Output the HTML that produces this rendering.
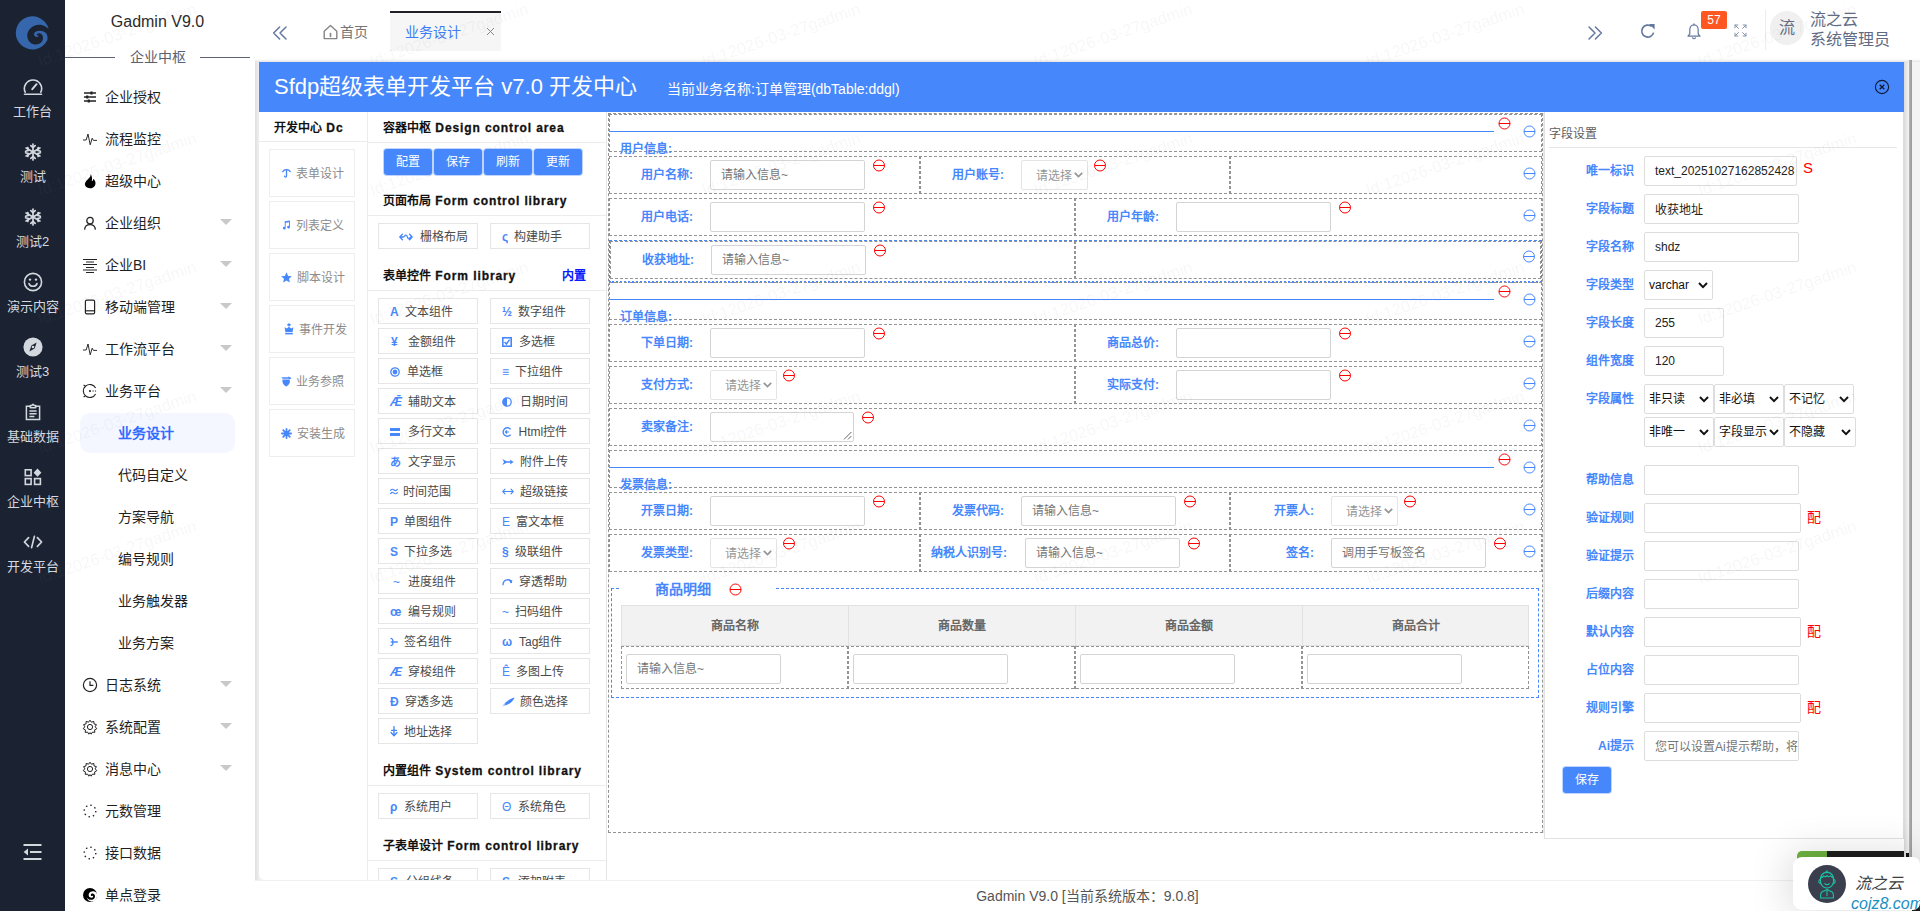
<!DOCTYPE html>
<html lang="zh-CN">
<head>
<meta charset="utf-8">
<title>Gadmin V9.0</title>
<style>
*{box-sizing:border-box;margin:0;padding:0}
html,body{width:1920px;height:911px;overflow:hidden;background:#fff;font-family:"Liberation Sans",sans-serif;font-size:14px;color:#333}
.abs{position:absolute}
/* dark rail */
#rail{position:absolute;left:0;top:0;width:65px;height:911px;background:#1b2332}
#rail .it{position:absolute;left:0;width:65px;text-align:center;color:#d5d9e0;font-size:13px;line-height:16px}
#rail .it svg{display:block;margin:0 auto}
/* side menu */
#side{position:absolute;left:65px;top:0;width:190px;height:911px;background:#fff}
#side .brand{position:absolute;left:0;top:11px;width:185px;text-align:center;font-size:16px;color:#2b2b2b;line-height:22px}
#side .grp{position:absolute;left:0;top:47px;width:185px;text-align:center;font-size:14px;color:#5b6172;line-height:20px}
#side .ln{position:absolute;top:57px;height:1px;background:#5b6172}
.mi{position:absolute;left:0;width:190px;height:42px;line-height:42px;font-size:14px;color:#1f1f1f}
.mi .ic{position:absolute;left:17px;top:13px;width:16px;height:16px}
.mi .tx{position:absolute;left:40px;top:0}
.mi.sub .tx{left:53px}
.mi .ar{position:absolute;left:155px;top:17px;width:0;height:0;border-left:6px solid transparent;border-right:6px solid transparent;border-top:6px solid #c9c9c9}
#selbg{position:absolute;left:15px;top:413px;width:155px;height:40px;background:#f4f7ff;border-radius:10px}
/* header */
#hdr{position:absolute;left:255px;top:0;width:1665px;height:62px;background:#fff}
/* main container */
#shade{position:absolute;left:255px;top:59px;width:1665px;height:852px;background:linear-gradient(90deg,#dfdfdf 0,#efefef 4px,#f3f3f3 5px)}
#shade2{position:absolute;left:255px;top:59px;width:1665px;height:3px;background:linear-gradient(#fff,#e4e4e4)}
#main{position:absolute;left:259px;top:62px;width:1645px;height:818px;background:#fff;border-radius:0 0 0 6px}
#bar{position:absolute;left:0;top:0;width:1646px;height:50px;background:#4787fc;color:#fff}
#bar .t1{position:absolute;left:15px;top:10px;font-size:22px;line-height:30px;white-space:nowrap}
#bar .t2{position:absolute;left:408px;top:18px;font-size:14px;line-height:18px;white-space:nowrap}
#foot{position:absolute;left:255px;top:880px;width:1665px;height:31px;border-top:1px solid #f0f0f0;background:#fff;text-align:center;font-size:14px;line-height:30px;color:#555}

.mi .ic svg{display:block;width:16px;height:16px}
#hdr svg{position:absolute;display:block}
#hdr .tab1{position:absolute;left:85px;top:22px;font-size:14px;line-height:20px;color:#757575}
#hdr .tab2{position:absolute;left:135px;top:11px;width:111px;height:40px;background:#f6f6f6;border-top:2px solid #1f2026}
#hdr .tab2 .t{position:absolute;left:15px;top:8px;font-size:14px;line-height:20px;color:#3d7cf5}
#hdr .badge{position:absolute;left:1446px;top:11px;width:26px;height:18px;background:#ff5722;border-radius:2px;color:#fff;font-size:12px;line-height:18px;text-align:center}
#hdr .vline{position:absolute;left:1510px;top:10px;width:1px;height:40px;background:#ececec}
#hdr .av{position:absolute;left:1515px;top:11px;width:34px;height:34px;border-radius:50%;background:#f0f0f0;color:#5f6b85;font-size:16px;line-height:34px;text-align:center}
#hdr .nm{position:absolute;left:1555px;font-size:16px;line-height:20px;color:#5f6b85;white-space:nowrap}

.lat{letter-spacing:.9px;margin-left:1px;-webkit-text-stroke:.3px #111}
.li{position:absolute;width:100px;height:26px;border:1px solid #e6e6e6;background:#fff;font-size:12px;line-height:26px;white-space:nowrap}
.li .i{position:absolute;left:11px;top:0;color:#4787fc;height:25px;display:flex;align-items:center;font-style:normal}
.li .t{position:absolute;top:0;color:#4a4a4a}
.fl{position:absolute;font-size:12px;font-weight:bold;color:#4787fc;line-height:18px;white-space:nowrap}
#wm{position:absolute;left:0;top:0;width:1920px;height:911px;overflow:hidden;pointer-events:none}
#wm span{position:absolute;font-size:16.5px;line-height:16px;white-space:nowrap;color:rgba(130,130,130,.075);transform-origin:0 13.5px;transform:rotate(-18.8deg)}
#edge1{position:absolute;left:1904px;top:62px;width:5px;height:818px;background:linear-gradient(90deg,#d9d9d9,#f4f4f4)}
#edge2{position:absolute;left:1909px;top:60px;width:3px;height:800px;background:linear-gradient(90deg,#b4b4b4,#9a9a9a)}
#edge3{position:absolute;left:1912px;top:62px;width:8px;height:849px;background:#f4f4f4}
</style>
</head>
<body>
<div id="rail">
<svg class="abs" style="left:8px;top:9.5px" width="50" height="50" viewBox="0 0 50 50"><path d="M40.6 19.2A16.6 16.6 0 1 0 39.4 30C39.8 27 39.4 24.5 37.6 22.8C35 20.4 30.5 20 27.2 22C25.6 23.2 25.6 25.6 27.4 26.6C28.8 27.4 30.8 27 30.8 25.6C29.6 26 28.4 25.2 28.8 24.2C30 22.6 33 23 34.2 25C35.6 27.4 35.2 30.6 33.2 32.6C30.4 35.2 25.4 35.2 22.2 32.4C18.6 29 18.2 23.4 21.4 19.4C25 14.8 32 13.2 37.4 16.4C38.8 17.2 39.8 18.2 40.6 19.2Z" fill="#3667ad"/></svg>
<div class="it" style="top:77px;height:20px"><div style="height:20px;display:flex;align-items:center;justify-content:center"><svg width="20" height="18" viewBox="0 0 20 18" fill="none" stroke="#d3d7de" stroke-width="1.6" stroke-linecap="round"><path d="M2.2 14.2A8.6 8.6 0 1 1 17.8 14.2"/><path d="M1.5 16.3H18.5"/><path d="M9.3 11.2L13.6 6.2" stroke-width="2"/></svg></div></div>
<div class="it" style="top:103.7px">工作台</div>
<div class="it" style="top:142px;height:20px"><div style="height:20px;display:flex;align-items:center;justify-content:center"><svg width="18" height="18" viewBox="0 0 18 18" fill="none" stroke="#d3d7de" stroke-width="1.7" stroke-linecap="round"><path d="M9 1V17M2.1 5L15.9 13M2.1 13L15.9 5"/><path d="M6.8 2.6L9 4.6L11.2 2.6M6.8 15.4L9 13.4L11.2 15.4M1.6 8.3L4.4 7.4L3.8 4.5M16.4 9.7L13.6 10.6L14.2 13.5M3.8 13.5L4.4 10.6L1.6 9.7M14.2 4.5L13.6 7.4L16.4 8.3"/></svg></div></div>
<div class="it" style="top:168.7px">测试</div>
<div class="it" style="top:207px;height:20px"><div style="height:20px;display:flex;align-items:center;justify-content:center"><svg width="18" height="18" viewBox="0 0 18 18" fill="none" stroke="#d3d7de" stroke-width="1.7" stroke-linecap="round"><path d="M9 1V17M2.1 5L15.9 13M2.1 13L15.9 5"/><path d="M6.8 2.6L9 4.6L11.2 2.6M6.8 15.4L9 13.4L11.2 15.4M1.6 8.3L4.4 7.4L3.8 4.5M16.4 9.7L13.6 10.6L14.2 13.5M3.8 13.5L4.4 10.6L1.6 9.7M14.2 4.5L13.6 7.4L16.4 8.3"/></svg></div></div>
<div class="it" style="top:233.7px">测试2</div>
<div class="it" style="top:272px;height:20px"><div style="height:20px;display:flex;align-items:center;justify-content:center"><svg width="20" height="20" viewBox="0 0 20 20" fill="none" stroke="#d3d7de" stroke-width="1.6" stroke-linecap="round"><circle cx="10" cy="10" r="8.6"/><path d="M6 11.6A4.3 4.3 0 0 0 14 11.6"/><circle cx="7" cy="7.6" r="1.2" fill="#d3d7de" stroke="none"/><circle cx="13" cy="7.6" r="1.2" fill="#d3d7de" stroke="none"/></svg></div></div>
<div class="it" style="top:298.7px">演示内容</div>
<div class="it" style="top:337px;height:20px"><div style="height:20px;display:flex;align-items:center;justify-content:center"><svg width="20" height="20" viewBox="0 0 20 20"><circle cx="10" cy="10" r="9.6" fill="#d3d7de"/><path d="M13.6 5.6L11.6 11.4L6.4 14.4L8.4 8.6Z" fill="#1b2332"/><circle cx="10" cy="10" r="1.3" fill="#d3d7de"/></svg></div></div>
<div class="it" style="top:363.7px">测试3</div>
<div class="it" style="top:402px;height:20px"><div style="height:20px;display:flex;align-items:center;justify-content:center"><svg width="18" height="18" viewBox="0 0 18 18" fill="none" stroke="#d3d7de" stroke-width="1.5"><path d="M6.3 3.2H2.4V16.6H15.6V3.2H11.7"/><path d="M6.3 4.8V2.6H7.8L9 1.2L10.2 2.6H11.7V4.8Z" stroke-linejoin="round"/><path d="M5.4 8H12.6M5.4 10.8H12.6M5.4 13.6H10.4"/></svg></div></div>
<div class="it" style="top:428.7px">基础数据</div>
<div class="it" style="top:467px;height:20px"><div style="height:20px;display:flex;align-items:center;justify-content:center"><svg width="18" height="18" viewBox="0 0 18 18" fill="none" stroke="#d3d7de" stroke-width="1.6"><rect x="1.3" y="1.8" width="5.8" height="5.8"/><rect x="1.3" y="10.6" width="5.8" height="5.8"/><rect x="10.6" y="10.6" width="5.8" height="5.8"/><path d="M13.5 0.6L17.4 4.7L13.5 8.8L9.6 4.7Z" fill="#d3d7de" stroke="none"/></svg></div></div>
<div class="it" style="top:493.7px">企业中枢</div>
<div class="it" style="top:532px;height:20px"><div style="height:20px;display:flex;align-items:center;justify-content:center"><svg width="20" height="14" viewBox="0 0 20 14" fill="none" stroke="#d3d7de" stroke-width="1.7" stroke-linecap="round" stroke-linejoin="round"><path d="M5.6 2.6L1.4 7L5.6 11.4M14.4 2.6L18.6 7L14.4 11.4M11.4 1.4L8.6 12.6"/></svg></div></div>
<div class="it" style="top:558.7px">开发平台</div>
<svg class="abs" style="left:23px;top:843px" width="19" height="18" viewBox="0 0 19 18" fill="none" stroke="#d3d7de" stroke-width="2"><path d="M0.5 2H18.5M7 9H18.5M0.5 16H18.5"/><path d="M0.6 9L5 5.6V12.4Z" fill="#d3d7de" stroke="none"/></svg>
</div>
<div id="side">
<div class="brand">Gadmin V9.0</div><div class="ln" style="left:0;width:50px"></div><div class="grp">企业中枢</div><div class="ln" style="left:135px;width:50px"></div><div id="selbg"></div>
<div class="mi" style="top:76px"><span class="ic"><svg viewBox="0 0 16 16" fill="none" stroke="#222" stroke-width="1.4"><path d="M2 4H14M2 8H14M2 12H14"/><path d="M9.5 2.4V5.6M5.2 6.4V9.6M6.8 10.4V13.6" stroke-width="2.2"/></svg></span><span class="tx">企业授权</span></div>
<div class="mi" style="top:118px"><span class="ic"><svg viewBox="0 0 16 16" fill="none" stroke="#222" stroke-width="0.95" stroke-linejoin="round" stroke-linecap="round"><path d="M1.4 9H4.2L6 3L8.2 13.8L10.2 7.2L11.4 9.4H14.6"/></svg></span><span class="tx">流程监控</span></div>
<div class="mi" style="top:160px"><span class="ic"><svg viewBox="0 0 16 16"><path d="M8.2 0.8C9.4 3 7.6 4.6 6 6.2C3.6 8.4 2.2 10.4 3.2 12.6C4.2 14.8 7 15.8 9.4 15.2C12.6 14.4 14.2 11.6 13.2 8.6C12.8 7.4 12.2 6.4 11.4 5.8C11.2 7.2 10.6 8 9.8 8.2C10.4 5.4 10 2.6 8.2 0.8Z" fill="#000"/></svg></span><span class="tx">超级中心</span></div>
<div class="mi" style="top:202px"><span class="ic"><svg viewBox="0 0 16 16" fill="none" stroke="#222" stroke-width="1.3"><circle cx="8" cy="5.6" r="3.2"/><path d="M2.6 14.6C2.8 11.4 4.8 9.6 8 9.6C11.2 9.6 13.2 11.4 13.4 14.6"/></svg></span><span class="tx">企业组织</span><span class="ar"></span></div>
<div class="mi" style="top:244px"><span class="ic"><svg viewBox="0 0 16 16" fill="none" stroke="#222" stroke-width="1"><path d="M1 2.5H15M4 5H12M1 7.5H15M4 10.5H12M1 13H15M4 15.5H12"/></svg></span><span class="tx">企业BI</span><span class="ar"></span></div>
<div class="mi" style="top:286px"><span class="ic"><svg viewBox="0 0 16 16" fill="none" stroke="#222" stroke-width="1.2"><rect x="3.4" y="1.2" width="9.2" height="13.6" rx="1.4"/><path d="M3.4 11.8H12.6"/></svg></span><span class="tx">移动端管理</span><span class="ar"></span></div>
<div class="mi" style="top:328px"><span class="ic"><svg viewBox="0 0 16 16" fill="none" stroke="#222" stroke-width="0.95" stroke-linejoin="round" stroke-linecap="round"><path d="M1.4 9H4.2L6 3L8.2 13.8L10.2 7.2L11.4 9.4H14.6"/></svg></span><span class="tx">工作流平台</span><span class="ar"></span></div>
<div class="mi" style="top:370px"><span class="ic"><svg viewBox="0 0 16 16" fill="none" stroke="#222" stroke-width="1.1"><path d="M13.6 5A6.5 6.5 0 1 0 13.6 11" /><circle cx="8" cy="8" r="1.1" fill="#222" stroke="none"/><path d="M10.5 8H14.6" stroke-dasharray="1.2 1.2"/><path d="M3 3.2L1.6 1.8M3 12.8L1.6 14.2" /></svg></span><span class="tx">业务平台</span><span class="ar"></span></div>
<div class="mi sub" style="top:412px"><span class="tx" style="color:#2f6bff;font-weight:bold">业务设计</span></div>
<div class="mi sub" style="top:454px"><span class="tx">代码自定义</span></div>
<div class="mi sub" style="top:496px"><span class="tx">方案导航</span></div>
<div class="mi sub" style="top:538px"><span class="tx">编号规则</span></div>
<div class="mi sub" style="top:580px"><span class="tx">业务触发器</span></div>
<div class="mi sub" style="top:622px"><span class="tx">业务方案</span></div>
<div class="mi" style="top:664px"><span class="ic"><svg viewBox="0 0 16 16" fill="none" stroke="#222" stroke-width="1.2"><circle cx="8" cy="8" r="6.6"/><path d="M8 4.2V8.4H11.4"/></svg></span><span class="tx">日志系统</span><span class="ar"></span></div>
<div class="mi" style="top:706px"><span class="ic"><svg viewBox="0 0 16 16" fill="none" stroke="#222" stroke-width="1"><circle cx="8" cy="8" r="2.6"/><path d="M8 1.2L9.4 3.2L11.8 2.4L12 4.9L14.4 5.6L13.2 7.8L14.8 9.7L12.6 10.9L12.8 13.4L10.4 13.1L9.2 15.2L8 13.6L6.8 15.2L5.6 13.1L3.2 13.4L3.4 10.9L1.2 9.7L2.8 7.8L1.6 5.6L4 4.9L4.2 2.4L6.6 3.2Z" stroke-linejoin="round"/></svg></span><span class="tx">系统配置</span><span class="ar"></span></div>
<div class="mi" style="top:748px"><span class="ic"><svg viewBox="0 0 16 16" fill="none" stroke="#222" stroke-width="1"><circle cx="8" cy="8" r="2.6"/><path d="M8 1.2L9.4 3.2L11.8 2.4L12 4.9L14.4 5.6L13.2 7.8L14.8 9.7L12.6 10.9L12.8 13.4L10.4 13.1L9.2 15.2L8 13.6L6.8 15.2L5.6 13.1L3.2 13.4L3.4 10.9L1.2 9.7L2.8 7.8L1.6 5.6L4 4.9L4.2 2.4L6.6 3.2Z" stroke-linejoin="round"/></svg></span><span class="tx">消息中心</span><span class="ar"></span></div>
<div class="mi" style="top:790px"><span class="ic"><svg viewBox="0 0 16 16" fill="none" stroke="#222" stroke-width="1.4" stroke-dasharray="1.4 3.1"><circle cx="8" cy="8" r="5.8"/></svg></span><span class="tx">元数管理</span></div>
<div class="mi" style="top:832px"><span class="ic"><svg viewBox="0 0 16 16" fill="none" stroke="#222" stroke-width="1.4" stroke-dasharray="1.4 3.1"><circle cx="8" cy="8" r="5.8"/></svg></span><span class="tx">接口数据</span></div>
<div class="mi" style="top:874px"><span class="ic"><svg viewBox="0 0 16 16"><circle cx="8" cy="8" r="7" fill="#000"/><path d="M14.6 6C12.6 3.6 8.4 3.8 7 6.6C6 8.8 7.4 11 9.6 10.8C11 10.6 11.6 9.2 10.8 8.4C10.2 9.6 8.6 9.2 8.8 7.8C9 6.4 11.2 6 12.4 7.4C13.6 8.8 13 11.4 11 12.4C8.4 13.6 5.6 12.4 4.6 10C5.2 13.6 9 15.4 12 14C14.6 12.6 15.8 9 14.6 6Z" fill="#fff"/></svg></span><span class="tx">单点登录</span></div>
</div>
<div id="hdr">
<svg style="left:17px;top:25px" width="16" height="16" viewBox="0 0 16 16" fill="none" stroke="#64789e" stroke-width="1.5" stroke-linecap="round" stroke-linejoin="round"><path d="M7.6 2L1.6 8L7.6 14M14 2L8 8L14 14"/></svg>
<svg style="left:67px;top:24px" width="17" height="16" viewBox="0 0 17 16" fill="none" stroke="#858585" stroke-width="1.4" stroke-linejoin="round"><path d="M2.2 7.2L8.5 1.6L14.8 7.2V14.6H2.2Z"/><path d="M8.5 9.6V12.4" stroke-linecap="round" stroke-width="1.6"/></svg>
<div class="tab1">首页</div>
<div class="tab2"><div class="t" style="top:9px">业务设计</div><svg style="left:96px;top:14px" width="9" height="9" viewBox="0 0 9 9" stroke="#858585" stroke-width="1"><path d="M1 1L8 8M8 1L1 8"/></svg></div>
<svg style="left:1332px;top:25px" width="16" height="16" viewBox="0 0 16 16" fill="none" stroke="#64789e" stroke-width="1.5" stroke-linecap="round" stroke-linejoin="round"><path d="M2 2L8 8L2 14M8.4 2L14.4 8L8.4 14"/></svg>
<svg style="left:1384px;top:22px" width="18" height="18" viewBox="0 0 18 18" fill="none" stroke="#64789e" stroke-width="1.7"><path d="M14.6 10.6A6 6 0 1 1 12.6 4.4"/><path d="M10 2H15.6V7.6Z" fill="#64789e" stroke="none"/></svg>
<svg style="left:1431px;top:23px" width="16" height="17" viewBox="0 0 16 17" fill="none" stroke="#64789e" stroke-width="1.2" stroke-linejoin="round" stroke-linecap="round"><path d="M8 1.8C5.2 1.8 3.8 4 3.8 6.8V11L2 13.2H14L12.2 11V6.8C12.2 4 10.8 1.8 8 1.8Z"/><path d="M6.6 14.8A1.5 1.5 0 0 0 9.4 14.8"/><path d="M8 0.8V1.8"/></svg>
<div class="badge">57</div>
<svg style="left:1479px;top:24px" width="13" height="13" viewBox="0 0 13 13" fill="none" stroke="#8290ab" stroke-width="1" stroke-linecap="round"><path d="M1 3.8V1H3.8M1 1L4.4 4.4M9.2 1H12V3.8M12 1L8.6 4.4M1 9.2V12H3.8M1 12L4.4 8.6M12 9.2V12H9.2M12 12L8.6 8.6" /></svg>
<div class="vline"></div>
<div class="av">流</div>
<div class="nm" style="top:10px">流之云</div><div class="nm" style="top:30px">系统管理员</div>
</div>
<div id="shade"></div><div id="shade2"></div>
<div id="main">
  <div id="bar"><div class="t1">Sfdp超级表单开发平台 v7.0 开发中心</div><div class="t2">当前业务名称:订单管理(dbTable:ddgl)</div>
  <svg style="position:absolute;left:1615px;top:17px" width="16" height="16" viewBox="0 0 16 16" fill="none" stroke="#0d1a33" stroke-width="1.1"><circle cx="8" cy="8" r="6.6"/><path d="M5.7 5.7L10.3 10.3M10.3 5.7L5.7 10.3" stroke-width="1.3"/></svg></div>
</div>
<div id="foot">Gadmin V9.0 [当前系统版本：9.0.8]</div>
<div id="edge1"></div><div id="edge3"></div><div id="edge2"></div>
<div id="cv">
<div style="position:absolute;left:274px;top:119px;white-space:nowrap;font-size:12px;font-weight:bold;color:#111;line-height:18px">开发中心 <span class="lat">Dc</span></div>
<div style="position:absolute;left:259px;top:141px;width:108px;height:1px;background:#ececec"></div>
<div style="position:absolute;left:367px;top:112px;width:1px;height:768px;background:#ececec"></div>
<div style="position:absolute;left:269px;top:149px;width:86px;height:48px;border:1px solid #eee;background:#fff"></div>
<div style="position:absolute;left:280px;top:167px;width:12px;height:12px;display:flex;align-items:center;justify-content:center"><svg width="9" height="10.5" viewBox="0 0 10 12" fill="none" stroke="#4787fc" stroke-width="1.5" stroke-linecap="round"><path d="M0.8 4.2C2.4 1.2 7.6 1.2 9.2 4.2"/><path d="M5 2.2V9.2C5 10.8 3 10.8 2.8 9.4"/></svg></div>
<div style="position:absolute;left:296px;top:165px;white-space:nowrap;font-size:12px;color:#8c8c8c;line-height:18px">表单设计</div>
<div style="position:absolute;left:269px;top:201px;width:86px;height:48px;border:1px solid #eee;background:#fff"></div>
<div style="position:absolute;left:280px;top:219px;width:12px;height:12px;display:flex;align-items:center;justify-content:center"><svg width="8.5" height="10" viewBox="0 0 10 12" fill="#4787fc"><path d="M3.2 1.6L9.4 0.6V8.6A1.7 1.5 0 1 1 8.3 7.2V2.6L4.3 3.3V9.8A1.7 1.5 0 1 1 3.2 8.4Z"/></svg></div>
<div style="position:absolute;left:296px;top:217px;white-space:nowrap;font-size:12px;color:#8c8c8c;line-height:18px">列表定义</div>
<div style="position:absolute;left:269px;top:253px;width:86px;height:48px;border:1px solid #eee;background:#fff"></div>
<div style="position:absolute;left:280px;top:271px;width:12px;height:12px;display:flex;align-items:center;justify-content:center"><svg width="11" height="11" viewBox="0 0 11 11" fill="#4787fc"><path d="M5.5 0.3L7.1 3.9L10.9 4.2L8 6.7L8.9 10.5L5.5 8.5L2.1 10.5L3 6.7L0.1 4.2L3.9 3.9Z"/></svg></div>
<div style="position:absolute;left:296.5px;top:269px;white-space:nowrap;font-size:12px;color:#8c8c8c;line-height:18px">脚本设计</div>
<div style="position:absolute;left:269px;top:305px;width:86px;height:48px;border:1px solid #eee;background:#fff"></div>
<div style="position:absolute;left:283px;top:323px;width:12px;height:12px;display:flex;align-items:center;justify-content:center"><svg width="10" height="12" viewBox="0 0 10 12" fill="#4787fc"><rect x="4.2" y="0.4" width="1.6" height="3"/><rect x="3.2" y="1.1" width="3.6" height="1.3"/><path d="M0.6 4.2L2.8 5.6L5 3.8L7.2 5.6L9.4 4.2L8.6 9H1.4Z"/><rect x="1.2" y="9.8" width="7.6" height="1.6"/></svg></div>
<div style="position:absolute;left:299px;top:321px;white-space:nowrap;font-size:12px;color:#8c8c8c;line-height:18px">事件开发</div>
<div style="position:absolute;left:269px;top:357px;width:86px;height:48px;border:1px solid #eee;background:#fff"></div>
<div style="position:absolute;left:280px;top:375px;width:12px;height:12px;display:flex;align-items:center;justify-content:center"><svg width="11" height="11" viewBox="0 0 11 11" fill="#4787fc"><path d="M0.4 1.2H9.8L8.6 2.8H1.6Z"/><path d="M1.6 3.6H8.6C9.6 6.2 7.8 9.8 5.2 10.4C2.6 9.8 0.8 6.2 1.6 3.6Z"/><path d="M7.2 0.2L10.6 2.4L8 3.2Z"/></svg></div>
<div style="position:absolute;left:296px;top:373px;white-space:nowrap;font-size:12px;color:#8c8c8c;line-height:18px">业务参照</div>
<div style="position:absolute;left:269px;top:409px;width:86px;height:48px;border:1px solid #eee;background:#fff"></div>
<div style="position:absolute;left:280px;top:427px;width:12px;height:12px;display:flex;align-items:center;justify-content:center"><svg width="11" height="11" viewBox="0 0 11 11" fill="none" stroke="#4787fc" stroke-width="1.8" stroke-linecap="round"><path d="M5.5 0.9V10.1M0.9 5.5H10.1M2.2 2.2L8.8 8.8M8.8 2.2L2.2 8.8"/></svg></div>
<div style="position:absolute;left:297px;top:425px;white-space:nowrap;font-size:12px;color:#8c8c8c;line-height:18px">安装生成</div>
<div style="position:absolute;left:606px;top:112px;width:1px;height:768px;background:#e4e4e4"></div>
<div style="position:absolute;left:383px;top:119px;white-space:nowrap;font-size:12px;font-weight:bold;color:#111;line-height:18px">容器中枢 <span class="lat">Design control area</span></div>
<div style="position:absolute;left:368px;top:142px;width:238px;height:1px;background:#ececec"></div>
<div style="position:absolute;left:384px;top:149px;width:48px;height:26px;background:#4787fc;border-radius:3px;color:#fff;font-size:12px;line-height:27px;text-align:center;box-shadow:0 0 0 1px rgba(71,135,252,.35)">配置</div>
<div style="position:absolute;left:434px;top:149px;width:48px;height:26px;background:#4787fc;border-radius:3px;color:#fff;font-size:12px;line-height:27px;text-align:center;box-shadow:0 0 0 1px rgba(71,135,252,.35)">保存</div>
<div style="position:absolute;left:484px;top:149px;width:48px;height:26px;background:#4787fc;border-radius:3px;color:#fff;font-size:12px;line-height:27px;text-align:center;box-shadow:0 0 0 1px rgba(71,135,252,.35)">刷新</div>
<div style="position:absolute;left:534px;top:149px;width:48px;height:26px;background:#4787fc;border-radius:3px;color:#fff;font-size:12px;line-height:27px;text-align:center;box-shadow:0 0 0 1px rgba(71,135,252,.35)">更新</div>
<div style="position:absolute;left:383px;top:192px;white-space:nowrap;font-size:12px;font-weight:bold;color:#111;line-height:18px">页面布局 <span class="lat">Form control library</span></div>
<div style="position:absolute;left:368px;top:215px;width:238px;height:1px;background:#ececec"></div>
<div class="li" style="left:378px;top:223px"><span class="i" style=""><svg width="14" height="8" viewBox="0 0 14 8" fill="none" stroke="#4787fc" stroke-width="1.3" stroke-linecap="round" stroke-linejoin="round" style="margin-left:9px"><path d="M3.4 1.2L0.8 4L3.4 6.8M0.8 4H4.4C5.6 4 5.6 2.2 7 2.2C8.4 2.2 8.4 5.8 9.8 5.8C10.6 5.8 10.8 4 13.2 4M10.6 1.2L13.2 4L10.6 6.8"/></svg></span><span class="t" style="left:41px">栅格布局</span></div>
<div class="li" style="left:490px;top:223px"><span class="i" style="font-weight:bold">ς</span><span class="t" style="left:23px">构建助手</span></div>
<div style="position:absolute;left:383px;top:267px;white-space:nowrap;font-size:12px;font-weight:bold;color:#111;line-height:18px">表单控件 <span class="lat">Form library</span></div>
<div style="position:absolute;left:368px;top:290px;width:238px;height:1px;background:#ececec"></div>
<div style="position:absolute;left:562px;top:267px;white-space:nowrap;font-size:12px;font-weight:bold;color:#0a1cff;line-height:18px">内置</div>
<div class="li" style="left:378px;top:298px"><span class="i" style="font-weight:bold">A</span><span class="t" style="left:25.5px">文本组件</span></div>
<div class="li" style="left:490px;top:298px"><span class="i" style="font-weight:bold">½</span><span class="t" style="left:27px">数字组件</span></div>
<div class="li" style="left:378px;top:328px"><span class="i" style="font-weight:bold;padding-left:1px">¥</span><span class="t" style="left:29px">金额组件</span></div>
<div class="li" style="left:490px;top:328px"><span class="i" style=""><svg width="10" height="10" viewBox="0 0 10 10" fill="none" stroke="#4787fc"><rect x="0.8" y="0.8" width="8.4" height="8.4" stroke-width="1.6"/><path d="M2.6 5L4.4 7L7.6 2.6" stroke-width="1.5"/></svg></span><span class="t" style="left:27.5px">多选框</span></div>
<div class="li" style="left:378px;top:358px"><span class="i" style=""><svg width="10" height="10" viewBox="0 0 10 10"><circle cx="5" cy="5" r="4.2" fill="none" stroke="#4787fc" stroke-width="1.3"/><circle cx="5" cy="5" r="2.4" fill="#4787fc"/></svg></span><span class="t" style="left:28px">单选框</span></div>
<div class="li" style="left:490px;top:358px"><span class="i" style="font-weight:bold">≡</span><span class="t" style="left:23.5px">下拉组件</span></div>
<div class="li" style="left:378px;top:388px"><span class="i" style=""><i style="font-weight:bold">Ǣ</i></span><span class="t" style="left:29px">辅助文本</span></div>
<div class="li" style="left:490px;top:388px"><span class="i" style=""><svg width="10" height="10" viewBox="0 0 10 10"><circle cx="5" cy="5" r="4.2" fill="none" stroke="#4787fc" stroke-width="1.3"/><path d="M5 0.8A4.2 4.2 0 0 0 5 9.2Z" fill="#4787fc"/></svg></span><span class="t" style="left:28.5px">日期时间</span></div>
<div class="li" style="left:378px;top:418px"><span class="i" style=""><svg width="10" height="10" viewBox="0 0 10 10" fill="#4787fc"><rect x="0" y="1" width="10" height="3"/><rect x="0" y="6" width="10" height="3"/></svg></span><span class="t" style="left:29px">多行文本</span></div>
<div class="li" style="left:490px;top:418px"><span class="i" style=""><svg width="10" height="10" viewBox="0 0 10 10" fill="none" stroke="#4787fc" stroke-width="1.4"><path d="M8.6 2.4A4.2 4.2 0 1 0 8.6 7.6"/><path d="M7 5H3.4M5 3.4L3.4 5L5 6.6" stroke-width="1.2"/></svg></span><span class="t" style="left:27.5px">Html控件</span></div>
<div class="li" style="left:378px;top:448px"><span class="i" style="font-weight:bold;font-size:11px">あ</span><span class="t" style="left:29px">文字显示</span></div>
<div class="li" style="left:490px;top:448px"><span class="i" style=""><svg width="12" height="8" viewBox="0 0 12 8" fill="#4787fc"><path d="M0.4 1L4.6 3.2H8.4L8 1.6L11.6 4L8 6.4L8.4 4.8H4.6L0.4 7L2 4Z"/></svg></span><span class="t" style="left:29px">附件上传</span></div>
<div class="li" style="left:378px;top:478px"><span class="i" style=""><svg width="8" height="7" viewBox="0 0 8 7" fill="none" stroke="#4787fc" stroke-width="1.1" stroke-linecap="round"><path d="M0.6 2.4C2 0.4 3.4 1.4 4 2C4.8 2.8 6.2 3 7.4 1.4M0.6 5.6C2 3.6 3.4 4.6 4 5.2C4.8 6 6.2 6.2 7.4 4.6"/></svg></span><span class="t" style="left:23.5px">时间范围</span></div>
<div class="li" style="left:490px;top:478px"><span class="i" style=""><svg width="12" height="7" viewBox="0 0 12 7" fill="none" stroke="#4787fc" stroke-width="1.1" stroke-linecap="round" stroke-linejoin="round"><path d="M0.8 3.5H11.2M3 1.2L0.8 3.5L3 5.8M9 1.2L11.2 3.5L9 5.8"/></svg></span><span class="t" style="left:29px">超级链接</span></div>
<div class="li" style="left:378px;top:508px"><span class="i" style="font-weight:bold">P</span><span class="t" style="left:25px">单图组件</span></div>
<div class="li" style="left:490px;top:508px"><span class="i" style="">E</span><span class="t" style="left:25px">富文本框</span></div>
<div class="li" style="left:378px;top:538px"><span class="i" style="font-weight:bold">S</span><span class="t" style="left:25px">下拉多选</span></div>
<div class="li" style="left:490px;top:538px"><span class="i" style="font-weight:bold">§</span><span class="t" style="left:23.5px">级联组件</span></div>
<div class="li" style="left:378px;top:568px"><span class="i" style="padding-left:3px">~</span><span class="t" style="left:29px">进度组件</span></div>
<div class="li" style="left:490px;top:568px"><span class="i" style=""><svg width="11" height="8" viewBox="0 0 11 8" fill="none" stroke="#4787fc" stroke-width="1.4" stroke-linecap="round"><path d="M1 6.6C1.4 0.6 8 0.6 9.4 4.4"/><path d="M7 1.6L10.6 2.4L8.6 5.6Z" fill="#4787fc" stroke="none"/></svg></span><span class="t" style="left:28px">穿透帮助</span></div>
<div class="li" style="left:378px;top:598px"><span class="i" style="font-weight:bold">œ</span><span class="t" style="left:28.5px">编号规则</span></div>
<div class="li" style="left:490px;top:598px"><span class="i" style="">~</span><span class="t" style="left:23.5px">扫码组件</span></div>
<div class="li" style="left:378px;top:628px"><span class="i" style=""><svg width="8" height="10" viewBox="0 0 8 10" fill="none" stroke="#4787fc" stroke-width="1.3" stroke-linecap="round"><path d="M1 1.4C3.4 2.2 3.4 4 1.6 5C3.4 6 3.4 7.8 1 8.6M2.8 5H7.4"/></svg></span><span class="t" style="left:25px">签名组件</span></div>
<div class="li" style="left:490px;top:628px"><span class="i" style="font-weight:bold">ω</span><span class="t" style="left:28px">Tag组件</span></div>
<div class="li" style="left:378px;top:658px"><span class="i" style="font-weight:bold"><i>Æ</i></span><span class="t" style="left:29px">穿梭组件</span></div>
<div class="li" style="left:490px;top:658px"><span class="i" style="">Ê</span><span class="t" style="left:25px">多图上传</span></div>
<div class="li" style="left:378px;top:688px"><span class="i" style="font-weight:bold">Đ</span><span class="t" style="left:26px">穿透多选</span></div>
<div class="li" style="left:490px;top:688px"><span class="i" style=""><svg width="13" height="10" viewBox="0 0 13 10" fill="#4787fc"><path d="M0.4 9.6C2 6.4 7 1.6 12.6 0.4C11.4 4.6 5.6 8.2 2.4 8.6Z"/><path d="M0.2 9.8L3.4 7" stroke="#fff" stroke-width="0.6"/></svg></span><span class="t" style="left:29px">颜色选择</span></div>
<div class="li" style="left:378px;top:718px"><span class="i" style=""><svg width="8" height="11" viewBox="0 0 8 11" fill="none" stroke="#4787fc" stroke-width="1.4" stroke-linecap="round" stroke-linejoin="round"><path d="M4 0.8V9.6M1 6.6L4 9.8L7 6.6M1.6 4.4H6.4"/></svg></span><span class="t" style="left:24.5px">地址选择</span></div>
<div style="position:absolute;left:383px;top:762px;white-space:nowrap;font-size:12px;font-weight:bold;color:#111;line-height:18px">内置组件 <span class="lat">System control library</span></div>
<div style="position:absolute;left:368px;top:785px;width:238px;height:1px;background:#ececec"></div>
<div class="li" style="left:378px;top:793px"><span class="i" style="font-weight:bold">ρ</span><span class="t" style="left:25px">系统用户</span></div>
<div class="li" style="left:490px;top:793px"><span class="i" style="">Θ</span><span class="t" style="left:27px">系统角色</span></div>
<div style="position:absolute;left:383px;top:837px;white-space:nowrap;font-size:12px;font-weight:bold;color:#111;line-height:18px">子表单设计 <span class="lat">Form control library</span></div>
<div style="position:absolute;left:368px;top:860px;width:238px;height:1px;background:#ececec"></div>
<div style="position:absolute;left:368px;top:861px;width:238px;height:19px;overflow:hidden">
<div class="li" style="left:10px;top:7px"><span class="i" style="font-weight:bold">S</span><span class="t" style="left:27px">分组线条</span></div>
<div class="li" style="left:122px;top:7px"><span class="i" style="font-weight:bold">S</span><span class="t" style="left:27px">添加附表</span></div>
</div>
<div style="position:absolute;left:608px;top:113px;width:935px;height:720px;border:1px dashed #939393"></div>
<div style="position:absolute;left:1543px;top:113px;width:2px;height:720px;background:#ebebeb"></div>
<div style="position:absolute;left:609px;top:114px;width:933px;height:38px;border:1px dashed #939393"></div>
<div style="position:absolute;left:610px;top:131px;width:884px;height:1px;background:#4787fc"></div>
<div style="position:absolute;left:620px;top:140px;white-space:nowrap;font-size:12px;font-weight:bold;color:#4787fc;line-height:18px">用户信息:</div>
<svg style="position:absolute;left:1497px;top:116px" width="15" height="15" viewBox="0 0 15 15" fill="none" stroke="#f00" stroke-width="1"><circle cx="7.5" cy="7.5" r="5.5"/><path d="M2 7.5H13"/></svg>
<svg style="position:absolute;left:1522px;top:124px" width="15" height="15" viewBox="0 0 15 15" fill="none" stroke="#4787fc" stroke-width="1"><circle cx="7.5" cy="7.5" r="5.5"/><path d="M2 7.5H13"/></svg>
<div style="position:absolute;left:609px;top:156px;width:933px;height:38px;border:1px dashed #939393"></div>
<div style="position:absolute;left:919px;top:156px;width:2px;height:38px;border-left:1px dashed #939393;border-right:1px dashed #939393"></div>
<div style="position:absolute;left:1229px;top:156px;width:2px;height:38px;border-left:1px dashed #939393;border-right:1px dashed #939393"></div>
<div class="fl" style="right:1227px;top:165.5px">用户名称:</div>
<div style="position:absolute;left:710px;top:160px;width:155px;height:30px;border:1px solid #d4d4d4;border-radius:2px;background:#fff;font-size:12px;line-height:29px;color:#757575;padding-left:10px;overflow:hidden;white-space:nowrap">请输入信息~</div>
<svg style="position:absolute;left:872px;top:158px" width="15" height="15" viewBox="0 0 15 15" fill="none" stroke="#f00" stroke-width="1"><circle cx="7" cy="7.5" r="5.5"/><path d="M1.5 7.5H12.5"/></svg>
<div class="fl" style="right:916px;top:165.5px">用户账号:</div>
<div style="position:absolute;left:1021px;top:160px;width:67px;height:30px;border:1px solid #e4e4e4;border-radius:2px;background:#fff"></div>
<div style="position:absolute;left:1036px;top:166.5px;white-space:nowrap;font-size:12px;line-height:18px;color:#969696">请选择</div>
<svg style="position:absolute;left:1074px;top:172px" width="9" height="6" viewBox="0 0 9 6" fill="none" stroke="#959595" stroke-width="1.7"><path d="M0.8 0.8L4.5 4.6L8.2 0.8"/></svg>
<svg style="position:absolute;left:1093px;top:158px" width="15" height="15" viewBox="0 0 15 15" fill="none" stroke="#f00" stroke-width="1"><circle cx="7" cy="7.5" r="5.5"/><path d="M1.5 7.5H12.5"/></svg>
<svg style="position:absolute;left:1522px;top:166px" width="15" height="15" viewBox="0 0 15 15" fill="none" stroke="#4787fc" stroke-width="1"><circle cx="7.5" cy="7.5" r="5.5"/><path d="M2 7.5H13"/></svg>
<div style="position:absolute;left:609px;top:198px;width:933px;height:38px;border:1px dashed #939393"></div>
<div style="position:absolute;left:1074px;top:198px;width:2px;height:38px;border-left:1px dashed #939393;border-right:1px dashed #939393"></div>
<div class="fl" style="right:1227px;top:207.5px">用户电话:</div>
<div style="position:absolute;left:710px;top:202px;width:155px;height:30px;border:1px solid #d4d4d4;border-radius:2px;background:#fff;font-size:12px;line-height:29px;color:#757575;padding-left:10px;overflow:hidden;white-space:nowrap"></div>
<svg style="position:absolute;left:872px;top:200px" width="15" height="15" viewBox="0 0 15 15" fill="none" stroke="#f00" stroke-width="1"><circle cx="7" cy="7.5" r="5.5"/><path d="M1.5 7.5H12.5"/></svg>
<div class="fl" style="right:761px;top:207.5px">用户年龄:</div>
<div style="position:absolute;left:1176px;top:202px;width:155px;height:30px;border:1px solid #d4d4d4;border-radius:2px;background:#fff;font-size:12px;line-height:29px;color:#757575;padding-left:10px;overflow:hidden;white-space:nowrap"></div>
<svg style="position:absolute;left:1338px;top:200px" width="15" height="15" viewBox="0 0 15 15" fill="none" stroke="#f00" stroke-width="1"><circle cx="7" cy="7.5" r="5.5"/><path d="M1.5 7.5H12.5"/></svg>
<svg style="position:absolute;left:1522px;top:208px" width="15" height="15" viewBox="0 0 15 15" fill="none" stroke="#4787fc" stroke-width="1"><circle cx="7.5" cy="7.5" r="5.5"/><path d="M2 7.5H13"/></svg>
<div style="position:absolute;left:609px;top:240px;width:933px;height:43px;border:1px dashed #4787fc;border-bottom:2px dotted #4787fc"></div>
<div style="position:absolute;left:610px;top:241px;width:931px;height:38px;border:1px dashed #939393"></div>
<div style="position:absolute;left:1074px;top:241px;width:2px;height:38px;border-left:1px dashed #939393;border-right:1px dashed #939393"></div>
<div class="fl" style="right:1226px;top:250.5px">收获地址:</div>
<div style="position:absolute;left:711px;top:245px;width:155px;height:30px;border:1px solid #d4d4d4;border-radius:2px;background:#fff;font-size:12px;line-height:29px;color:#757575;padding-left:10px;overflow:hidden;white-space:nowrap">请输入信息~</div>
<svg style="position:absolute;left:873px;top:243px" width="15" height="15" viewBox="0 0 15 15" fill="none" stroke="#f00" stroke-width="1"><circle cx="7" cy="7.5" r="5.5"/><path d="M1.5 7.5H12.5"/></svg>
<svg style="position:absolute;left:1522px;top:249px" width="15" height="15" viewBox="0 0 15 15" fill="none" stroke="#4787fc" stroke-width="1"><circle cx="7" cy="7.5" r="5.5"/><path d="M1.5 7.5H12.5"/></svg>
<div style="position:absolute;left:609px;top:282px;width:933px;height:38px;border:1px dashed #939393"></div>
<div style="position:absolute;left:610px;top:299px;width:884px;height:1px;background:#4787fc"></div>
<div style="position:absolute;left:620px;top:308px;white-space:nowrap;font-size:12px;font-weight:bold;color:#4787fc;line-height:18px">订单信息:</div>
<svg style="position:absolute;left:1497px;top:284px" width="15" height="15" viewBox="0 0 15 15" fill="none" stroke="#f00" stroke-width="1"><circle cx="7.5" cy="7.5" r="5.5"/><path d="M2 7.5H13"/></svg>
<svg style="position:absolute;left:1522px;top:292px" width="15" height="15" viewBox="0 0 15 15" fill="none" stroke="#4787fc" stroke-width="1"><circle cx="7.5" cy="7.5" r="5.5"/><path d="M2 7.5H13"/></svg>
<div style="position:absolute;left:609px;top:324px;width:933px;height:38px;border:1px dashed #939393"></div>
<div style="position:absolute;left:1074px;top:324px;width:2px;height:38px;border-left:1px dashed #939393;border-right:1px dashed #939393"></div>
<div class="fl" style="right:1227px;top:333.5px">下单日期:</div>
<div style="position:absolute;left:710px;top:328px;width:155px;height:30px;border:1px solid #d4d4d4;border-radius:2px;background:#fff;font-size:12px;line-height:29px;color:#757575;padding-left:10px;overflow:hidden;white-space:nowrap"></div>
<svg style="position:absolute;left:872px;top:326px" width="15" height="15" viewBox="0 0 15 15" fill="none" stroke="#f00" stroke-width="1"><circle cx="7" cy="7.5" r="5.5"/><path d="M1.5 7.5H12.5"/></svg>
<div class="fl" style="right:761px;top:333.5px">商品总价:</div>
<div style="position:absolute;left:1176px;top:328px;width:155px;height:30px;border:1px solid #d4d4d4;border-radius:2px;background:#fff;font-size:12px;line-height:29px;color:#757575;padding-left:10px;overflow:hidden;white-space:nowrap"></div>
<svg style="position:absolute;left:1338px;top:326px" width="15" height="15" viewBox="0 0 15 15" fill="none" stroke="#f00" stroke-width="1"><circle cx="7" cy="7.5" r="5.5"/><path d="M1.5 7.5H12.5"/></svg>
<svg style="position:absolute;left:1522px;top:334px" width="15" height="15" viewBox="0 0 15 15" fill="none" stroke="#4787fc" stroke-width="1"><circle cx="7.5" cy="7.5" r="5.5"/><path d="M2 7.5H13"/></svg>
<div style="position:absolute;left:609px;top:366px;width:933px;height:38px;border:1px dashed #939393"></div>
<div style="position:absolute;left:1074px;top:366px;width:2px;height:38px;border-left:1px dashed #939393;border-right:1px dashed #939393"></div>
<div class="fl" style="right:1227px;top:375.5px">支付方式:</div>
<div style="position:absolute;left:710px;top:370px;width:67px;height:30px;border:1px solid #e4e4e4;border-radius:2px;background:#fff"></div>
<div style="position:absolute;left:725px;top:376.5px;white-space:nowrap;font-size:12px;line-height:18px;color:#969696">请选择</div>
<svg style="position:absolute;left:763px;top:382px" width="9" height="6" viewBox="0 0 9 6" fill="none" stroke="#959595" stroke-width="1.7"><path d="M0.8 0.8L4.5 4.6L8.2 0.8"/></svg>
<svg style="position:absolute;left:782px;top:368px" width="15" height="15" viewBox="0 0 15 15" fill="none" stroke="#f00" stroke-width="1"><circle cx="7" cy="7.5" r="5.5"/><path d="M1.5 7.5H12.5"/></svg>
<div class="fl" style="right:761px;top:375.5px">实际支付:</div>
<div style="position:absolute;left:1176px;top:370px;width:155px;height:30px;border:1px solid #d4d4d4;border-radius:2px;background:#fff;font-size:12px;line-height:29px;color:#757575;padding-left:10px;overflow:hidden;white-space:nowrap"></div>
<svg style="position:absolute;left:1338px;top:368px" width="15" height="15" viewBox="0 0 15 15" fill="none" stroke="#f00" stroke-width="1"><circle cx="7" cy="7.5" r="5.5"/><path d="M1.5 7.5H12.5"/></svg>
<svg style="position:absolute;left:1522px;top:376px" width="15" height="15" viewBox="0 0 15 15" fill="none" stroke="#4787fc" stroke-width="1"><circle cx="7.5" cy="7.5" r="5.5"/><path d="M2 7.5H13"/></svg>
<div style="position:absolute;left:609px;top:408px;width:933px;height:38px;border:1px dashed #939393"></div>
<div class="fl" style="right:1227px;top:417.5px">卖家备注:</div>
<div style="position:absolute;left:710px;top:412px;width:144px;height:30px;border:1px solid #d4d4d4;border-radius:2px;background:#fff"></div>
<svg style="position:absolute;left:843px;top:431px" width="9" height="9" viewBox="0 0 9 9" stroke="#555" stroke-width="0.9"><path d="M8.4 1L1 8.4M8.4 5L5 8.4"/></svg>
<svg style="position:absolute;left:861px;top:410px" width="15" height="15" viewBox="0 0 15 15" fill="none" stroke="#f00" stroke-width="1"><circle cx="7" cy="7.5" r="5.5"/><path d="M1.5 7.5H12.5"/></svg>
<svg style="position:absolute;left:1522px;top:418px" width="15" height="15" viewBox="0 0 15 15" fill="none" stroke="#4787fc" stroke-width="1"><circle cx="7.5" cy="7.5" r="5.5"/><path d="M2 7.5H13"/></svg>
<div style="position:absolute;left:609px;top:450px;width:933px;height:38px;border:1px dashed #939393"></div>
<div style="position:absolute;left:610px;top:467px;width:884px;height:1px;background:#4787fc"></div>
<div style="position:absolute;left:620px;top:476px;white-space:nowrap;font-size:12px;font-weight:bold;color:#4787fc;line-height:18px">发票信息:</div>
<svg style="position:absolute;left:1497px;top:452px" width="15" height="15" viewBox="0 0 15 15" fill="none" stroke="#f00" stroke-width="1"><circle cx="7.5" cy="7.5" r="5.5"/><path d="M2 7.5H13"/></svg>
<svg style="position:absolute;left:1522px;top:460px" width="15" height="15" viewBox="0 0 15 15" fill="none" stroke="#4787fc" stroke-width="1"><circle cx="7.5" cy="7.5" r="5.5"/><path d="M2 7.5H13"/></svg>
<div style="position:absolute;left:609px;top:492px;width:933px;height:38px;border:1px dashed #939393"></div>
<div style="position:absolute;left:919px;top:492px;width:2px;height:38px;border-left:1px dashed #939393;border-right:1px dashed #939393"></div>
<div style="position:absolute;left:1229px;top:492px;width:2px;height:38px;border-left:1px dashed #939393;border-right:1px dashed #939393"></div>
<div class="fl" style="right:1227px;top:501.5px">开票日期:</div>
<div style="position:absolute;left:710px;top:496px;width:155px;height:30px;border:1px solid #d4d4d4;border-radius:2px;background:#fff;font-size:12px;line-height:29px;color:#757575;padding-left:10px;overflow:hidden;white-space:nowrap"></div>
<svg style="position:absolute;left:872px;top:494px" width="15" height="15" viewBox="0 0 15 15" fill="none" stroke="#f00" stroke-width="1"><circle cx="7" cy="7.5" r="5.5"/><path d="M1.5 7.5H12.5"/></svg>
<div class="fl" style="right:916px;top:501.5px">发票代码:</div>
<div style="position:absolute;left:1021px;top:496px;width:155px;height:30px;border:1px solid #d4d4d4;border-radius:2px;background:#fff;font-size:12px;line-height:29px;color:#757575;padding-left:10px;overflow:hidden;white-space:nowrap">请输入信息~</div>
<svg style="position:absolute;left:1183px;top:494px" width="15" height="15" viewBox="0 0 15 15" fill="none" stroke="#f00" stroke-width="1"><circle cx="7" cy="7.5" r="5.5"/><path d="M1.5 7.5H12.5"/></svg>
<div class="fl" style="right:606px;top:501.5px">开票人:</div>
<div style="position:absolute;left:1331px;top:496px;width:67px;height:30px;border:1px solid #e4e4e4;border-radius:2px;background:#fff"></div>
<div style="position:absolute;left:1346px;top:502.5px;white-space:nowrap;font-size:12px;line-height:18px;color:#969696">请选择</div>
<svg style="position:absolute;left:1384px;top:508px" width="9" height="6" viewBox="0 0 9 6" fill="none" stroke="#959595" stroke-width="1.7"><path d="M0.8 0.8L4.5 4.6L8.2 0.8"/></svg>
<svg style="position:absolute;left:1403px;top:494px" width="15" height="15" viewBox="0 0 15 15" fill="none" stroke="#f00" stroke-width="1"><circle cx="7" cy="7.5" r="5.5"/><path d="M1.5 7.5H12.5"/></svg>
<svg style="position:absolute;left:1522px;top:502px" width="15" height="15" viewBox="0 0 15 15" fill="none" stroke="#4787fc" stroke-width="1"><circle cx="7.5" cy="7.5" r="5.5"/><path d="M2 7.5H13"/></svg>
<div style="position:absolute;left:609px;top:534px;width:933px;height:38px;border:1px dashed #939393"></div>
<div style="position:absolute;left:919px;top:534px;width:2px;height:38px;border-left:1px dashed #939393;border-right:1px dashed #939393"></div>
<div style="position:absolute;left:1229px;top:534px;width:2px;height:38px;border-left:1px dashed #939393;border-right:1px dashed #939393"></div>
<div class="fl" style="right:1227px;top:543.5px">发票类型:</div>
<div style="position:absolute;left:710px;top:538px;width:67px;height:30px;border:1px solid #e4e4e4;border-radius:2px;background:#fff"></div>
<div style="position:absolute;left:725px;top:544.5px;white-space:nowrap;font-size:12px;line-height:18px;color:#969696">请选择</div>
<svg style="position:absolute;left:763px;top:550px" width="9" height="6" viewBox="0 0 9 6" fill="none" stroke="#959595" stroke-width="1.7"><path d="M0.8 0.8L4.5 4.6L8.2 0.8"/></svg>
<svg style="position:absolute;left:782px;top:536px" width="15" height="15" viewBox="0 0 15 15" fill="none" stroke="#f00" stroke-width="1"><circle cx="7" cy="7.5" r="5.5"/><path d="M1.5 7.5H12.5"/></svg>
<div class="fl" style="left:931px;top:543.5px">纳税人识别号:</div>
<div style="position:absolute;left:1025px;top:538px;width:155px;height:30px;border:1px solid #d4d4d4;border-radius:2px;background:#fff;font-size:12px;line-height:29px;color:#757575;padding-left:10px;overflow:hidden;white-space:nowrap">请输入信息~</div>
<svg style="position:absolute;left:1187px;top:536px" width="15" height="15" viewBox="0 0 15 15" fill="none" stroke="#f00" stroke-width="1"><circle cx="7" cy="7.5" r="5.5"/><path d="M1.5 7.5H12.5"/></svg>
<div class="fl" style="right:606px;top:543.5px">签名:</div>
<div style="position:absolute;left:1331px;top:538px;width:155px;height:30px;border:1px solid #d4d4d4;border-radius:2px;background:#fff;font-size:12px;line-height:29px;color:#757575;padding-left:10px;overflow:hidden;white-space:nowrap">调用手写板签名</div>
<svg style="position:absolute;left:1493px;top:536px" width="15" height="15" viewBox="0 0 15 15" fill="none" stroke="#f00" stroke-width="1"><circle cx="7" cy="7.5" r="5.5"/><path d="M1.5 7.5H12.5"/></svg>
<svg style="position:absolute;left:1522px;top:544px" width="15" height="15" viewBox="0 0 15 15" fill="none" stroke="#4787fc" stroke-width="1"><circle cx="7.5" cy="7.5" r="5.5"/><path d="M2 7.5H13"/></svg>
<div style="position:absolute;left:611px;top:588px;width:928px;height:110px;border:1px dashed #4787fc"></div>
<div style="position:absolute;left:619px;top:586px;width:157px;height:5px;background:#fff"></div>
<div style="position:absolute;left:655px;top:579px;white-space:nowrap;font-size:14px;font-weight:bold;color:#4787fc;line-height:20px">商品明细</div>
<svg style="position:absolute;left:728px;top:582px" width="15" height="15" viewBox="0 0 15 15" fill="none" stroke="#f00" stroke-width="1"><circle cx="7.5" cy="7.5" r="5.5"/><path d="M2 7.5H13"/></svg>
<div style="position:absolute;left:621px;top:605px;width:908px;height:41px;background:#f2f2f2;border:1px solid #e2e2e2"></div>
<div style="position:absolute;left:621px;top:617px;width:227px;height:18px;text-align:center;font-size:12px;font-weight:bold;color:#666;line-height:18px">商品名称</div>
<div style="position:absolute;left:848px;top:605px;width:1px;height:41px;background:#e2e2e2"></div>
<div style="position:absolute;left:848px;top:617px;width:227px;height:18px;text-align:center;font-size:12px;font-weight:bold;color:#666;line-height:18px">商品数量</div>
<div style="position:absolute;left:1075px;top:605px;width:1px;height:41px;background:#e2e2e2"></div>
<div style="position:absolute;left:1075px;top:617px;width:227px;height:18px;text-align:center;font-size:12px;font-weight:bold;color:#666;line-height:18px">商品金额</div>
<div style="position:absolute;left:1302px;top:605px;width:1px;height:41px;background:#e2e2e2"></div>
<div style="position:absolute;left:1302px;top:617px;width:227px;height:18px;text-align:center;font-size:12px;font-weight:bold;color:#666;line-height:18px">商品合计</div>
<div style="position:absolute;left:621px;top:646px;width:908px;height:43px;border:1px dashed #939393"></div>
<div style="position:absolute;left:847px;top:646px;width:2px;height:43px;border-left:1px dashed #939393;border-right:1px dashed #939393"></div>
<div style="position:absolute;left:1074px;top:646px;width:2px;height:43px;border-left:1px dashed #939393;border-right:1px dashed #939393"></div>
<div style="position:absolute;left:1301px;top:646px;width:2px;height:43px;border-left:1px dashed #939393;border-right:1px dashed #939393"></div>
<div style="position:absolute;left:626px;top:654px;width:155px;height:30px;border:1px solid #d4d4d4;border-radius:2px;background:#fff;font-size:12px;line-height:29px;color:#757575;padding-left:10px;overflow:hidden;white-space:nowrap">请输入信息~</div>
<div style="position:absolute;left:853px;top:654px;width:155px;height:30px;border:1px solid #d4d4d4;border-radius:2px;background:#fff;font-size:12px;line-height:29px;color:#757575;padding-left:10px;overflow:hidden;white-space:nowrap"></div>
<div style="position:absolute;left:1080px;top:654px;width:155px;height:30px;border:1px solid #d4d4d4;border-radius:2px;background:#fff;font-size:12px;line-height:29px;color:#757575;padding-left:10px;overflow:hidden;white-space:nowrap"></div>
<div style="position:absolute;left:1307px;top:654px;width:155px;height:30px;border:1px solid #d4d4d4;border-radius:2px;background:#fff;font-size:12px;line-height:29px;color:#757575;padding-left:10px;overflow:hidden;white-space:nowrap"></div>
<div style="position:absolute;left:1544px;top:112px;width:360px;height:727px;border-left:1px solid #e2e2e2;border-bottom:1px solid #e2e2e2;border-right:1px solid #dcdcdc;background:#fff"></div>
<div style="position:absolute;left:1549px;top:124.5px;white-space:nowrap;font-size:12px;color:#5e5e5e;line-height:18px">字段设置</div>
<div style="position:absolute;left:1549px;top:147px;width:348px;height:1px;background:#e6e6e6"></div>
<div class="fl" style="right:286px;top:161.5px">唯一标识</div>
<div style="position:absolute;left:1644px;top:156px;width:153px;height:30px;border:1px solid #ddd;border-radius:2px;background:#fff;font-size:12px;line-height:28px;color:#222;padding-left:10px;overflow:hidden;white-space:nowrap">text_20251027162852428</div>
<div style="position:absolute;left:1803px;top:159px;white-space:nowrap;font-size:15px;line-height:18px;color:#f00">S</div>
<div class="fl" style="right:286px;top:199.5px">字段标题</div>
<div style="position:absolute;left:1644px;top:194px;width:155px;height:30px;border:1px solid #ddd;border-radius:2px;background:#fff;font-size:12px;line-height:30px;color:#222;padding-left:10px;overflow:hidden;white-space:nowrap">收获地址</div>
<div class="fl" style="right:286px;top:237.5px">字段名称</div>
<div style="position:absolute;left:1644px;top:232px;width:155px;height:30px;border:1px solid #ddd;border-radius:2px;background:#fff;font-size:12px;line-height:28px;color:#222;padding-left:10px;overflow:hidden;white-space:nowrap">shdz</div>
<div class="fl" style="right:286px;top:275.5px">字段类型</div>
<div style="position:absolute;left:1644px;top:270px;width:69px;height:30px;border:1px solid #ddd;border-radius:2px;background:#fff;font-size:12px;line-height:28px;color:#111;padding-left:4px;white-space:nowrap;overflow:hidden">varchar</div>
<svg style="position:absolute;left:1698px;top:282px" width="10" height="7" viewBox="0 0 10 7" fill="none" stroke="#111" stroke-width="1.9"><path d="M1 1L5 5.2L9 1"/></svg>
<div class="fl" style="right:286px;top:313.5px">字段长度</div>
<div style="position:absolute;left:1644px;top:308px;width:80px;height:30px;border:1px solid #ddd;border-radius:2px;background:#fff;font-size:12px;line-height:28px;color:#222;padding-left:10px;overflow:hidden;white-space:nowrap">255</div>
<div class="fl" style="right:286px;top:351.5px">组件宽度</div>
<div style="position:absolute;left:1644px;top:346px;width:80px;height:30px;border:1px solid #ddd;border-radius:2px;background:#fff;font-size:12px;line-height:28px;color:#222;padding-left:10px;overflow:hidden;white-space:nowrap">120</div>
<div class="fl" style="right:286px;top:389.5px">字段属性</div>
<div style="position:absolute;left:1644px;top:384px;width:70px;height:30px;border:1px solid #ddd;border-radius:2px;background:#fff;font-size:12px;line-height:28px;color:#111;padding-left:4px;white-space:nowrap;overflow:hidden">非只读</div>
<svg style="position:absolute;left:1699px;top:396px" width="10" height="7" viewBox="0 0 10 7" fill="none" stroke="#111" stroke-width="1.9"><path d="M1 1L5 5.2L9 1"/></svg>
<div style="position:absolute;left:1714px;top:384px;width:70px;height:30px;border:1px solid #ddd;border-radius:2px;background:#fff;font-size:12px;line-height:28px;color:#111;padding-left:4px;white-space:nowrap;overflow:hidden">非必填</div>
<svg style="position:absolute;left:1769px;top:396px" width="10" height="7" viewBox="0 0 10 7" fill="none" stroke="#111" stroke-width="1.9"><path d="M1 1L5 5.2L9 1"/></svg>
<div style="position:absolute;left:1784px;top:384px;width:70px;height:30px;border:1px solid #ddd;border-radius:2px;background:#fff;font-size:12px;line-height:28px;color:#111;padding-left:4px;white-space:nowrap;overflow:hidden">不记忆</div>
<svg style="position:absolute;left:1839px;top:396px" width="10" height="7" viewBox="0 0 10 7" fill="none" stroke="#111" stroke-width="1.9"><path d="M1 1L5 5.2L9 1"/></svg>
<div style="position:absolute;left:1644px;top:417px;width:70px;height:30px;border:1px solid #ddd;border-radius:2px;background:#fff;font-size:12px;line-height:28px;color:#111;padding-left:4px;white-space:nowrap;overflow:hidden">非唯一</div>
<svg style="position:absolute;left:1699px;top:429px" width="10" height="7" viewBox="0 0 10 7" fill="none" stroke="#111" stroke-width="1.9"><path d="M1 1L5 5.2L9 1"/></svg>
<div style="position:absolute;left:1714px;top:417px;width:70px;height:30px;border:1px solid #ddd;border-radius:2px;background:#fff;font-size:12px;line-height:28px;color:#111;padding-left:4px;white-space:nowrap;overflow:hidden">字段显示</div>
<svg style="position:absolute;left:1769px;top:429px" width="10" height="7" viewBox="0 0 10 7" fill="none" stroke="#111" stroke-width="1.9"><path d="M1 1L5 5.2L9 1"/></svg>
<div style="position:absolute;left:1784px;top:417px;width:72px;height:30px;border:1px solid #ddd;border-radius:2px;background:#fff;font-size:12px;line-height:28px;color:#111;padding-left:4px;white-space:nowrap;overflow:hidden">不隐藏</div>
<svg style="position:absolute;left:1841px;top:429px" width="10" height="7" viewBox="0 0 10 7" fill="none" stroke="#111" stroke-width="1.9"><path d="M1 1L5 5.2L9 1"/></svg>
<div class="fl" style="right:286px;top:470.5px">帮助信息</div>
<div style="position:absolute;left:1644px;top:465px;width:155px;height:30px;border:1px solid #ddd;border-radius:2px;background:#fff;font-size:12px;line-height:28px;color:#222;padding-left:10px;overflow:hidden;white-space:nowrap"></div>
<div class="fl" style="right:286px;top:508.5px">验证规则</div>
<div style="position:absolute;left:1644px;top:503px;width:157px;height:30px;border:1px solid #ddd;border-radius:2px;background:#fff;font-size:12px;line-height:28px;color:#222;padding-left:10px;overflow:hidden;white-space:nowrap"></div>
<div style="position:absolute;left:1807px;top:508px;white-space:nowrap;font-size:14px;line-height:18px;color:#f00">配</div>
<div class="fl" style="right:286px;top:546.5px">验证提示</div>
<div style="position:absolute;left:1644px;top:541px;width:155px;height:30px;border:1px solid #ddd;border-radius:2px;background:#fff;font-size:12px;line-height:28px;color:#222;padding-left:10px;overflow:hidden;white-space:nowrap"></div>
<div class="fl" style="right:286px;top:584.5px">后缀内容</div>
<div style="position:absolute;left:1644px;top:579px;width:155px;height:30px;border:1px solid #ddd;border-radius:2px;background:#fff;font-size:12px;line-height:28px;color:#222;padding-left:10px;overflow:hidden;white-space:nowrap"></div>
<div class="fl" style="right:286px;top:622.5px">默认内容</div>
<div style="position:absolute;left:1644px;top:617px;width:157px;height:30px;border:1px solid #ddd;border-radius:2px;background:#fff;font-size:12px;line-height:28px;color:#222;padding-left:10px;overflow:hidden;white-space:nowrap"></div>
<div style="position:absolute;left:1807px;top:622px;white-space:nowrap;font-size:14px;line-height:18px;color:#f00">配</div>
<div class="fl" style="right:286px;top:660.5px">占位内容</div>
<div style="position:absolute;left:1644px;top:655px;width:155px;height:30px;border:1px solid #ddd;border-radius:2px;background:#fff;font-size:12px;line-height:28px;color:#222;padding-left:10px;overflow:hidden;white-space:nowrap"></div>
<div class="fl" style="right:286px;top:698.5px">规则引擎</div>
<div style="position:absolute;left:1644px;top:693px;width:157px;height:30px;border:1px solid #ddd;border-radius:2px;background:#fff;font-size:12px;line-height:28px;color:#222;padding-left:10px;overflow:hidden;white-space:nowrap"></div>
<div style="position:absolute;left:1807px;top:698px;white-space:nowrap;font-size:14px;line-height:18px;color:#f00">配</div>
<div class="fl" style="right:286px;top:736.5px">Ai提示</div>
<div style="position:absolute;left:1644px;top:731px;width:155px;height:30px;border:1px solid #ddd;border-radius:2px;background:#fff;font-size:12px;line-height:30px;color:#757575;padding-left:10px;overflow:hidden;white-space:nowrap">您可以设置Ai提示帮助，将</div>
<div style="position:absolute;left:1563px;top:767px;width:48px;height:26px;background:#4787fc;border-radius:3px;color:#fff;font-size:12px;line-height:27px;text-align:center;box-shadow:0 0 0 1px rgba(71,135,252,.35)">保存</div>
<div id="wm">
<span style="left:40px;top:52.5px">Id:12026-03-27gadmin</span>
<span style="left:372px;top:52.5px">Id:12026-03-27gadmin</span>
<span style="left:704px;top:52.5px">Id:12026-03-27gadmin</span>
<span style="left:1036px;top:52.5px">Id:12026-03-27gadmin</span>
<span style="left:1368px;top:52.5px">Id:12026-03-27gadmin</span>
<span style="left:1700px;top:52.5px">Id:12026-03-27gadmin</span>
<span style="left:40px;top:181.8px">Id:12026-03-27gadmin</span>
<span style="left:372px;top:181.8px">Id:12026-03-27gadmin</span>
<span style="left:704px;top:181.8px">Id:12026-03-27gadmin</span>
<span style="left:1036px;top:181.8px">Id:12026-03-27gadmin</span>
<span style="left:1368px;top:181.8px">Id:12026-03-27gadmin</span>
<span style="left:1700px;top:181.8px">Id:12026-03-27gadmin</span>
<span style="left:40px;top:311.1px">Id:12026-03-27gadmin</span>
<span style="left:372px;top:311.1px">Id:12026-03-27gadmin</span>
<span style="left:704px;top:311.1px">Id:12026-03-27gadmin</span>
<span style="left:1036px;top:311.1px">Id:12026-03-27gadmin</span>
<span style="left:1368px;top:311.1px">Id:12026-03-27gadmin</span>
<span style="left:1700px;top:311.1px">Id:12026-03-27gadmin</span>
<span style="left:40px;top:440.40000000000003px">Id:12026-03-27gadmin</span>
<span style="left:372px;top:440.40000000000003px">Id:12026-03-27gadmin</span>
<span style="left:704px;top:440.40000000000003px">Id:12026-03-27gadmin</span>
<span style="left:1036px;top:440.40000000000003px">Id:12026-03-27gadmin</span>
<span style="left:1368px;top:440.40000000000003px">Id:12026-03-27gadmin</span>
<span style="left:1700px;top:440.40000000000003px">Id:12026-03-27gadmin</span>
<span style="left:40px;top:569.7px">Id:12026-03-27gadmin</span>
<span style="left:372px;top:569.7px">Id:12026-03-27gadmin</span>
<span style="left:704px;top:569.7px">Id:12026-03-27gadmin</span>
<span style="left:1036px;top:569.7px">Id:12026-03-27gadmin</span>
<span style="left:1368px;top:569.7px">Id:12026-03-27gadmin</span>
<span style="left:1700px;top:569.7px">Id:12026-03-27gadmin</span>
</div>
<div style="position:absolute;left:1797px;top:851px;width:30px;height:12px;background:#6db33f;border-radius:5px 0 0 0"></div>
<div style="position:absolute;left:1827px;top:851px;width:77px;height:12px;background:#1e1e1e"></div>
<div style="position:absolute;left:1906px;top:853px;width:3px;height:5px;background:#111"></div>
<div style="position:absolute;left:1912px;top:892px;width:8px;height:19px;background:#1e1e1e"></div>
<div style="position:absolute;left:1793px;top:857px;width:126.5px;height:53px;background:#fff;border-radius:9px 7px 7px 9px;box-shadow:0 0 38px 6px rgba(0,0,0,.13)"></div>
<svg style="position:absolute;left:1808px;top:865px" width="38" height="38" viewBox="0 0 38 38"><circle cx="19" cy="19" r="19" fill="#3a3e4d"/><g fill="none" stroke="#19c3a6" stroke-width="1.1" stroke-linecap="round" stroke-linejoin="round"><path d="M12.4 15.5C12.4 10 14.8 7.4 19 7.4C23.2 7.4 25.6 10 25.6 15.5C25.6 20 22.8 23 19 23C15.2 23 12.4 20 12.4 15.5Z"/><path d="M12.8 12.6C14.2 12.8 15.2 11.8 15.6 10.8C16.6 12 18.2 11.8 19 10.6C20 12 21.8 12 22.6 10.8C23.2 12 24.2 12.6 25.4 12.6"/><path d="M17.8 7.6C17.8 6.4 18.8 5.8 19.8 6.2"/><path d="M12.4 14.4C10.4 14.4 10.4 18.6 12.6 18.4M25.6 14.4C27.6 14.4 27.6 18.6 25.4 18.4"/><path d="M16.8 18.4C17.6 20 20.4 20 21.2 18.4"/><path d="M12.6 33V30C12.6 27.4 15 26 17 25.6L19 24.6L21 25.6C23 26 25.4 27.4 25.4 30V33Z"/><path d="M19 24.8V30.6"/></g></svg>
<div style="position:absolute;left:1855px;top:872px;white-space:nowrap;font-size:16px;line-height:24px;color:#3c3c3c;font-style:italic">流之云</div>
<div style="position:absolute;left:1851px;top:893px;white-space:nowrap;font-size:16px;line-height:22px;color:#1b8fc6;font-style:italic">cojz8.com</div>
</div>
</body>
</html>
